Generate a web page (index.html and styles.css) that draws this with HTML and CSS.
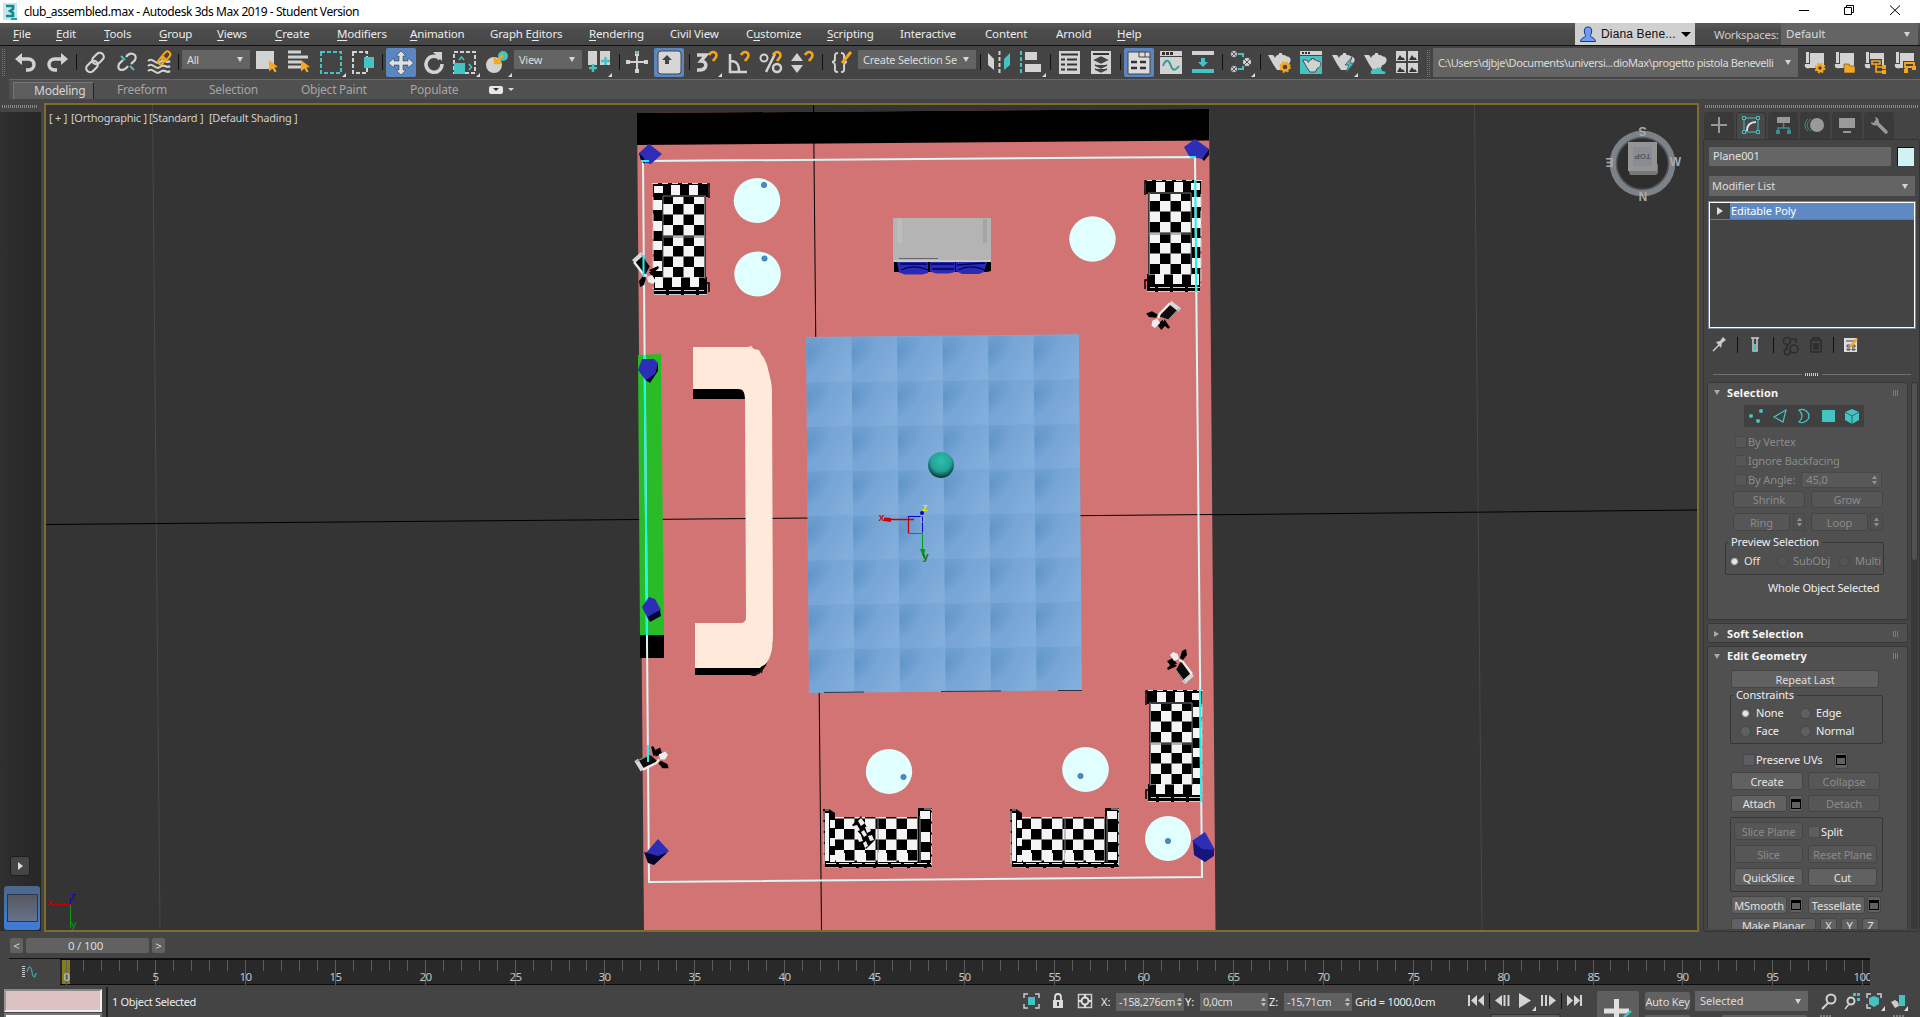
FILE: index.html
```html
<!DOCTYPE html>
<html lang="en">
<head>
<meta charset="utf-8">
<title>club_assembled.max - Autodesk 3ds Max 2019 - Student Version</title>
<link rel="stylesheet" href="styles.css">
</head>
<body>
<header class="titlebar">
  <svg class="logo" viewBox="0 0 17 20"><rect x="1" y="1" width="14" height="17" fill="#c9e6ea"/><path d="M4 4h7v3l-3 2 3 2v3H4" fill="none" stroke="#0c8a96" stroke-width="2.6"/><path d="M9 17h6" stroke="#17a6b0" stroke-width="2"/></svg>
  <span class="title">club_assembled.max - Autodesk 3ds Max 2019 - Student Version</span>
  <svg class="winctl" viewBox="1790 0 120 23" fill="none" stroke="#000"><path d="M1799 10.500h10M1844.500 7.500h7v7h-7zM1846.500 7.500v-2h7v7h-2M1890 5.500l10 9.500M1900 5.500l-10 9.500"/></svg>
</header>

<nav class="menubar">
  <div class="menus">
    <span><u>F</u>ile</span><span><u>E</u>dit</span><span><u>T</u>ools</span><span><u>G</u>roup</span><span><u>V</u>iews</span><span><u>C</u>reate</span><span><u>M</u>odifiers</span><span><u>A</u>nimation</span><span>Graph E<u>d</u>itors</span><span><u>R</u>endering</span><span>Civil View</span><span>C<u>u</u>stomize</span><span><u>S</u>cripting</span><span>Interactive</span><span>Content</span><span>Arnold</span><span><u>H</u>elp</span>
  </div>
  <div class="user"><svg viewBox="0 0 16 17"><path d="M8 1c3 0 4 2 3.600 5-.3 2-1 3-1.600 4 1 1.500 5 1.500 5.500 5.500H.5C1 11.500 5 11.500 6 10 5.300 9 4.700 8 4.400 6 4 3 5 1 8 1z" fill="#6f9df5" stroke="#16357c"/></svg><span>Diana Bene...</span><i class="tri black"></i></div>
  <span class="wslabel">Workspaces:</span>
  <div class="select ws"><span>Default</span><i class="tri"></i></div>
</nav>

<div class="toolbar">
  <svg class="tg" width="182" height="33" viewBox="0 46 182 33">
    <path d="M4.500 49v28M2.500 49v28" stroke="#777" stroke-dasharray="1 1"/>
    <g fill="none" stroke="#d2d2d2" stroke-width="3.400"><path d="M19 59h9c8 0 8 11 0 11h-2"/><path d="M64 59h-9c-8 0-8 11 0 11h2"/></g>
    <path d="M15 59l7-6v12zM68 59l-7-6v12z" fill="#d2d2d2"/>
    <path d="M76.500 54v16M178.500 54v16" stroke="#111"/>
    <g fill="none" stroke="#d2d2d2" stroke-width="2.200"><g id="chain"><rect x="94" y="52" width="8" height="13" rx="4" transform="rotate(45 98 58.500)"/><rect x="88" y="60" width="8" height="13" rx="4" transform="rotate(45 92 66.500)"/></g>
    <path d="M126 57c4-6 12-3 9 3l-4 4M128 66c-4 6-12 5-9-2l4-4"/>
    <path d="M148 61c5-5 7 5 12 1s6 2 10-1M148 66c5-5 7 5 12 1s6 2 10-1M148 71c5-5 7 5 12 1s6 2 10-1"/></g>
    <path d="M121 56l4 4M130 66l4 4" stroke="#45c3c3" stroke-width="2"/>
    <g fill="none" stroke="#f5a81c" stroke-width="2"><rect x="163" y="51" width="6" height="10" rx="3" transform="rotate(40 166 56)"/><rect x="159" y="57" width="5" height="8" rx="2.500" transform="rotate(40 162 61)"/></g>
  </svg>
  <div class="select sm"><span>All</span><i class="tri"></i></div>
  <svg class="tg" width="264" height="33" viewBox="250 46 264 33">
    <path d="M256 51h18v18h-18z" fill="#d2d2d2"/>
    <path id="cur" d="M269 60l9 7-3.500.5 2 4-2 1-2-4-3.500 3z" fill="#f5a81c"/>
    <path d="M288 52h13M288 57h20M288 62h13M288 67h13" stroke="#d2d2d2" stroke-width="3"/><use href="#cur" x="32"/>
    <rect x="321" y="52" width="20" height="21" fill="none" stroke="#45c3c3" stroke-width="2" stroke-dasharray="4 2"/>
    <rect x="353" y="52" width="14" height="21" fill="none" stroke="#d2d2d2" stroke-width="2" stroke-dasharray="4 2"/><path d="M364 57h10v11h-10z" fill="#45c3c3"/>
    <path d="M346 73v4h-4zM480 73v4h-4zM512 73v4h-4z" fill="#ddd"/>
    <path d="M382.500 54v16" stroke="#111"/>
    <rect x="386" y="48" width="30" height="29" rx="2" fill="#5c86c0"/>
    <path d="M401 51l5 5h-3v5h5v-3l5.500 5-5.500 5v-3h-5v5h3l-5 5-5-5h3v-5h-5v3l-5.500-5 5.500-5v3h5v-5h-3z" fill="#e0e0e0" stroke="#2c3e5c" stroke-width=".6"/>
    <path d="M440 59a8 8 0 1 0 2 5" fill="none" stroke="#d2d2d2" stroke-width="3.500"/><path d="M433 52h9v9z" fill="#d2d2d2"/>
    <rect x="454" y="52" width="21" height="21" fill="none" stroke="#d2d2d2" stroke-width="2" stroke-dasharray="4 2"/><path d="M454 63h11v11h-11z" fill="#45c3c3"/><path d="M459 60l2.500-3 2.500 3M469 64l2.500 3-2.500 3" fill="none" stroke="#45c3c3" stroke-width="1.600"/>
    <circle cx="494" cy="65" r="8" fill="#d2d2d2"/><circle cx="503" cy="56" r="5" fill="#45c3c3"/><path d="M503 55l-8 8M495 57v6h6" fill="none" stroke="#f5a81c" stroke-width="2.500"/>
  </svg>
  <div class="select sm"><span>View</span><i class="tri"></i></div>
  <svg class="tg" width="276" height="33" viewBox="582 46 276 33">
    <path d="M588 51h9v14h-9zM600 51h10v14h-10z" fill="#d2d2d2"/><path d="M589 68h8M593 64v8M601 61h9M605.500 57v8" stroke="#45c3c3" stroke-width="2.500"/>
    <path d="M612 73v4h-4zM722 73v4h-4z" fill="#ddd"/>
    <path d="M619.500 54v16M689.500 54v16M822.500 54v16" stroke="#111"/>
    <path d="M627 62h20M637 52v20" stroke="#d2d2d2" stroke-width="2"/><path d="M635 51h4v5h-4zM635 69h4v4h-4zM626 60h4v4h-4zM644 60h4v4h-4z" fill="#d2d2d2"/><path d="M637 51v3" stroke="#45c3c3" stroke-width="3"/>
    <rect x="654" y="48" width="30" height="29" rx="2" fill="#5c86c0"/><rect x="658" y="51" width="23" height="23" rx="3" fill="#d6d6d6" stroke="#444"/><path d="M667 55l5 5h-3v4h-4v-4h-3z" fill="#444"/>
    <path d="M697 55h9l-5 6c7 0 7 10-4 9" fill="none" stroke="#d2d2d2" stroke-width="3.500"/>
    <path id="mag" d="M709 55c3-5 9-3 7 2l-3 4" fill="none" stroke="#f5a81c" stroke-width="2.600"/>
    <path d="M730 54v18h17M731 61c7 0 8 5 8 11" fill="none" stroke="#d2d2d2" stroke-width="2.500"/><use href="#mag" x="32"/>
    <circle cx="764" cy="58" r="3.500" fill="none" stroke="#d2d2d2" stroke-width="2"/><circle cx="777" cy="68" r="4" fill="none" stroke="#d2d2d2" stroke-width="2.500"/><path d="M775 54l-9 18" stroke="#d2d2d2" stroke-width="2.500"/><use href="#mag" x="64"/>
    <path d="M791 61l6-8 6 8zM791 65l6 8 6-8z" fill="#d2d2d2"/><use href="#mag" x="96"/>
    <path d="M838 53c-4 0-3 3-3 6s-3 3-3 3 3 0 3 4-1 6 3 6M841 53c4 0 3 3 3 6s3 3 3 3-3 0-3 4 1 6-3 6" fill="none" stroke="#d2d2d2" stroke-width="2"/><path d="M851 52l-9 11" stroke="#f5a81c" stroke-width="3"/>
  </svg>
  <div class="select md"><span>Create Selection Se</span><i class="tri"></i></div>
  <svg class="tg" width="457" height="33" viewBox="976 46 457 33">
    <path d="M980.500 54v16M1050.500 54v16M1120.500 54v16M1222.500 54v16M1260.500 54v16" stroke="#111"/>
    <path d="M988 53l6 6v11l-6-5z" fill="#d2d2d2"/><path d="M999.500 51v23" stroke="#d2d2d2" stroke-width="2" stroke-dasharray="4 2"/><path d="M1010 53l-6 6v11l6-5z" fill="#45c3c3"/>
    <path d="M1021 51v23" stroke="#45c3c3" stroke-width="2" stroke-dasharray="4 2"/><path d="M1025 52h12v8h-12zM1025 64h16v8h-16z" fill="#d2d2d2"/><path d="M1046 73v4h-4zM1255 73v4h-4zM1358 73v4h-4z" fill="#ddd"/>
    <path d="M1059 51h21v23h-21zM1091 51h20v23h-20z" fill="#d2d2d2"/><path d="M1061 54.500h17M1061 59.500h4M1067 59.500h10M1061 64.500h4M1067 64.500h10M1061 69.500h4M1067 69.500h10" stroke="#333" stroke-width="1.800"/>
    <path d="M1093 54h16" stroke="#333" stroke-width="2"/><path d="M1095 60l6-3 6 3-6 3zM1095 65l6 3 6-3M1095 69l6 3 6-3" fill="#444" stroke="#444" stroke-width="1.500"/>
    <rect x="1124" y="48" width="30" height="29" rx="2" fill="#5c86c0"/><path d="M1128 52h22v22h-22z" fill="#dcdcdc" stroke="#444"/><path d="M1139 52v5h11M1145 52v5" fill="none" stroke="#444"/><path d="M1131 62h6M1140 62h6M1131 68h6M1140 68h6" stroke="#333" stroke-width="2.500"/>
    <path d="M1160 51h22v23h-22z" fill="#d2d2d2"/><path d="M1162 53.500h3M1166 53.500h3M1170 53.500h3" stroke="#333" stroke-width="3"/><path d="M1160 56.500h22" stroke="#444"/><path d="M1163 66c3-8 6-6 8 0s5 4 8 0" fill="none" stroke="#2e9d9f" stroke-width="2"/>
    <path d="M1192 53h22" stroke="#d2d2d2" stroke-width="4"/><path d="M1192 71h22" stroke="#45c3c3" stroke-width="4"/><path d="M1201 58h4v4h3l-5 5-5-5h3z" fill="#45c3c3"/>
    <g fill="#d2d2d2" stroke="#333" stroke-width=".8"><circle cx="1234" cy="54" r="3.500"/><circle cx="1234" cy="69" r="3.500"/><circle cx="1247" cy="62" r="4.500"/></g><path d="M1232 52l4 4m0-4l-4 4M1232 67l4 4m0-4l-4 4M1244 59l6 6m0-6l-6 6" stroke="#555"/><path d="M1238 54h5v3M1238 69h5v-3" fill="none" stroke="#45c3c3" stroke-width="2"/>
    <defs><path id="pot" d="M-1 5h5c1 1 1.500 2 2 3C7 5 9 5 10 4.500V3h3v1.500c2 .5 4 1 5 2 5 0 5 7-1 9l-2 4.500H8L4 14z" fill="#d2d2d2"/></defs>
    <use href="#pot" x="1269" y="50"/><circle cx="1285" cy="67" r="3.500" fill="#444" stroke="#f5a81c" stroke-width="2.500"/><circle cx="1285" cy="67" r="5" fill="none" stroke="#f5a81c" stroke-width="1.500" stroke-dasharray="2 2"/>
    <path d="M1300 51h22v4h-22z" fill="#d2d2d2"/><path d="M1302 53h9" stroke="#333" stroke-width="2" stroke-dasharray="2 1"/><path d="M1300 56h22v18h-22z" fill="#45c3c3"/><g transform="translate(1303.500 56) scale(.8)"><use href="#pot" stroke="#333"/></g>
    <use href="#pot" x="1333" y="50"/><path d="M1352 57l-7 8h4l-4 9 9-11h-4z" fill="#45c3c3" stroke="#444" stroke-width=".7"/>
    <use href="#pot" x="1365" y="50"/><path d="M1371 74c-1-4 2-6 5-5 2-3 6-1 6 2 5 0 4 3 2 3z" fill="#45c3c3"/>
    <path d="M1396 51h10v10h-10zM1408 51h10v10h-10zM1396 63h10v10h-10zM1408 63h10v10h-10z" fill="#d2d2d2"/><path d="M1397 60l3-5 2 3 1-1 2 3zM1409 60l3-5 2 3 1-1 2 3zM1397 72l3-5 2 3 1-1 2 3zM1409 72l3-5 2 3 1-1 2 3z" fill="#333"/>
    <path d="M1427.500 50v28M1429.500 50v28" stroke="#777" stroke-dasharray="1 1"/>
  </svg>
  <div class="select path"><span>C:\Users\djbje\Documents\universi...dioMax\progetto pistola Benevelli</span><i class="tri"></i></div>
  <svg class="tg" width="122" height="33" viewBox="1798 46 122 33">
    <defs><path id="scr" d="M1806 52h3v11h-3zM1810 53h14v15h-14c-3 1-6 0-5-4h5z" fill="#d2d2d2"/></defs>
    <use href="#scr"/><circle cx="1820" cy="68" r="3" fill="#444" stroke="#f5a81c" stroke-width="2.500"/><circle cx="1820" cy="68" r="4.700" fill="none" stroke="#f5a81c" stroke-width="1.500" stroke-dasharray="2 1.700"/>
    <use href="#scr" x="30"/><path d="M1844 64h5l1 2h5v7h-11z" fill="#f5a81c" stroke="#444" stroke-width=".6"/>
    <use href="#scr" x="60"/><path d="M1870 59h12v14h-12z" fill="#444"/><path d="M1872 61h8v3h-8zM1876 64v8h8M1876 67h8" fill="none" stroke="#f5a81c" stroke-width="1.600"/><path d="M1882 65h4v4h-4zM1882 70h4v4h-4z" fill="#f5a81c"/>
    <use href="#scr" x="90"/><path d="M1903 61h12v8h-12z" fill="#444"/><path d="M1905 63h9v4h-9zM1907 67v5M1907 68h-2" fill="none" stroke="#f5a81c" stroke-width="1.800"/><path d="M1904 69h4v4h-4zM1912 66h4v4h-4z" fill="#f5a81c"/>
  </svg>
</div>

<div class="ribbon">
  <div class="tab on">Modeling</div><div class="tabs"><span>Freeform</span><span>Selection</span><span>Object Paint</span><span>Populate</span></div>
  <div class="pill"><i></i></div><i class="tri tiny"></i>
</div>

<main class="work">
  <aside class="left">
    <div class="grip"></div>
    <div class="strip"><div class="play"><i></i></div><div class="layout"><i></i></div></div>
  </aside>

  <section class="viewport">
    <svg class="scene" width="1651" height="825" viewBox="46 105 1651 825">
      <defs>
        <radialGradient id="tshade" gradientUnits="userSpaceOnUse" cx="2" cy="24" r="26" gradientTransform="rotate(-40 2 24) scale(1.3 .7)"><stop offset="0" stop-color="#5f94c8"/><stop offset="1" stop-color="#5f94c8" stop-opacity="0"/></radialGradient>
        <linearGradient id="tg" x1="0" y1="0" x2="1" y2=".6"><stop offset="0" stop-color="#76a5d6"/><stop offset=".6" stop-color="#78a6d6"/><stop offset="1" stop-color="#82aedb"/></linearGradient>
        <pattern id="tile" width="45.500" height="44.500" patternUnits="userSpaceOnUse"><rect width="46" height="45" fill="url(#tg)"/><rect width="46" height="45" fill="url(#tshade)"/><path d="M0 .5h46" stroke="#7fabdb" stroke-width=".6"/></pattern>
        <pattern id="chk" width="21" height="21" patternUnits="userSpaceOnUse"><path fill="#f4f4f4" d="M0 0h21v21H0z"/><path d="M0 0h10.500v10.500H0zM10.500 10.500H21V21H10.500z"/></pattern>
        <radialGradient id="ball" cx=".5" cy=".35" r=".65"><stop offset="0" stop-color="#2bc0b0"/><stop offset=".6" stop-color="#24a396"/><stop offset="1" stop-color="#06332f"/></radialGradient>
        <g id="sofaV">
          <path d="M1 0h55v14h-2v80h1v18H2z" fill="#000"/>
          <path d="M2 3h9v7H2zM19 2h9v10h-9zM37 2h9v10h-9z" fill="#f4f4f4"/>
          <path d="M11 14h42v81H11z" fill="url(#chk)"/>
          <path d="M1 17h9v10H1zM1 38h9v10H1zM1 58h9v9H1zM1 78h9v10H1z" fill="#f4f4f4"/>
          <path d="M3 94h8v11H3zM20 94h9v10h-9zM38 94h9v10h-9z" fill="#f4f4f4"/>
          <path d="M11 13v83M12 54h42M53 13v83M11 13h43" stroke="#777" fill="none"/>
          <path d="M0 .5h57v14" fill="none" stroke="#ddd" stroke-dasharray="6 4"/><path d="M2 107.500h50M2 111.500h53M1 14v92" fill="none" stroke="#ccc" stroke-dasharray="12 3"/>
          <path d="M2 30h-1M55 1h2v14M55 100h2v9" fill="none" stroke="#000" stroke-width="1.500"/>
        </g>
        <g id="sofaH">
          <path d="M0 1h6l6 4v5h83V0h14v60H2z" fill="#000"/><path d="M12 9h83v45H12z" fill="url(#chk)"/>
          <path d="M97 3h10v8H97zM98 24h9v10h-9zM98 44h9v8h-9zM2 5h4v48H2zM7 12h5v8H7zM7 30h5v8H7zM7 47h5v7H7z" fill="#f4f4f4"/>
          <path d="M55 9v46M97 8v46" stroke="#888"/>
          <path d="M13 45h9v9h-9zM34 45h9v9h-9zM55 45h9v9h-9zM76 45h9v9h-9z" fill="#f4f4f4"/>
          <path d="M3 55.500h105" stroke="#eee" stroke-dasharray="10 3"/><path d="M1 56V2h5M101 1h7.500v57" fill="none" stroke="#ccc" stroke-dasharray="9 2"/>
          <path d="M2 59.500h107" stroke="#aaa" stroke-dasharray="14 3"/>
        </g>
        <g id="spot"><path d="M-12-9l7-6 9 13-5 9z" fill="#0c0c0c"/><path d="M-14-8l9-8 3 3-9 8z" fill="#d8d8d8"/><path d="M-12-6l9 12 4 2" fill="none" stroke="#eee" stroke-width="2.200"/><path d="M-5-14l9 12" stroke="#999"/><path d="M3 2l9-4 1 2-6 5zM-7 13l4-5 3 2-2 7-4 2zM3 4l7-1 3 4-6 3z" fill="#000"/><path d="M1 9l5-2 4 6-3 3-5-2z" fill="#eee"/></g>
      </defs>
      <g stroke="#484848"><path d="M152.500 105L160 930M1474.500 105l7.500 825"/></g>
      <path d="M46 524.500L640 519.500M1210 514.800L1697 510" stroke="#000"/>
      <path d="M637 113l572-4 6.500 821H644z" fill="#d27474"/>
      <path d="M637 113l572-4v31.500L637 145z"/>
      <path d="M813.500 105L821.500 930M640 519.500L1213 514.500" stroke="#000"/>
      <path d="M638 355l23-1 3 281h-24z" fill="#2abb29"/><path d="M640 635h24v23h-24z"/>
      <path d="M693 389v10h52v-12zM695 665v10h55l3 1c12-2 20-20 20-44l-17 28z"/>
      <path d="M752 674l4 1 1-2 4-1 1-4 3-3 1-5 3-4 1-8 2-6" fill="none" stroke="#111" stroke-width="2.500" stroke-dasharray="4 1"/>
      <path d="M693 347h55l3-1 3 3 5 1 2 4 3 4 3 7 3 12c2 9 2 10 2 20l1 239c0 14-3 28-11 30l-2 2h-65v-45h45c4 0 6-2 6-6l-1-217c0-8-2-11-7-11h-45z" fill="#ffe9da"/>
      <g transform="matrix(1 -.010 .0084 1 806 337)"><rect width="273" height="356" fill="url(#tile)"/></g>
      <path d="M824 692.500l40-.5M941 691.500l60-.5M1058 690.500h24" stroke="#334"/>
      <g fill="#e2ffff"><ellipse cx="757" cy="200.500" rx="23.300" ry="22.500"/><ellipse cx="757.500" cy="274" rx="23.300" ry="22.500"/><ellipse cx="1092.500" cy="239" rx="23.200" ry="22.700"/><ellipse cx="889" cy="771.500" rx="23.200" ry="22.500"/><ellipse cx="1085.500" cy="769.500" rx="23.300" ry="22.500"/><ellipse cx="1168" cy="838.500" rx="23" ry="22.500"/></g>
      <g fill="#4c8bc5" stroke="#346d9f" stroke-width=".8"><circle cx="764" cy="185" r="2.600"/><circle cx="764.500" cy="258.500" r="2.600"/><circle cx="903.500" cy="777" r="2.600"/><circle cx="1080.500" cy="776" r="2.600"/><circle cx="1168" cy="841" r="2.600"/></g>
      <path d="M893 218h98v44h-98z" fill="#b4b4b4"/><path d="M897 219h5v24h-5z" fill="#bdbdbd"/><path d="M983 219h4v24h-4z" fill="#a5a5a5"/><path d="M894 261h97" stroke="#ddd"/><path d="M899 258.500h39" stroke="#666"/>
      <path d="M894 262h97v9l-4 1H894z"/><path d="M897 262h31v11l-6 1.500h-17l-6-2zM930 262h25v10l-6 1.500h-13l-6-2zM956 262h31l-3 10-5 2h-17l-6-3z" fill="#2a2ab4"/><path d="M901 270c8-4 18-4 27 0M932 269h22M958 270c8-4 18-4 27 0M900 264h27M931 264h23M957 265l28-2" fill="none" stroke="#000060" stroke-width="1.300"/>
      <use href="#sofaV" x="652" y="183"/><use href="#sofaV" transform="translate(1202 180) scale(-1 1)"/><use href="#sofaV" transform="translate(1203 690) scale(-1 1)"/>
      <use href="#sofaH" x="823" y="808"/><use href="#sofaH" x="1010" y="808"/>
      <g transform="translate(853 818)"><path d="M-1 7L8-2l4 8 10 16-9 9-3-4-2-10z"/><path d="M8 0l4 5-4 3-3-5zM0 8l4-1 3 5-4 2zM12 9l4-1 2 5-4 2zM8 14l3-2 3 5-3 2zM4 18l4 0 2 5-4 1zM15 18l4-1 2 5-4 1zM10 25l3-2 2 5-3 2z" fill="#eee"/></g>
      <g fill="none" stroke-width="2"><path d="M643 161l552-4 7 720-553 5z" stroke="#d7f7f5"/><path d="M644.500 355l2.500 280M1195.300 180l1 112M1200 690l1.200 112" stroke="#20f2ee"/></g>
      <g><path d="M639 153l10-9 13 10-11 10-9-2z" fill="#2d2db8"/><path d="M639 153l5 5 1 6-4-3z" fill="#04042c"/>
      <path d="M1184 147l11-8 14 10-7 10-13-3z" fill="#2d2db8"/><path d="M1202 159l7-10v6l-5 6z" fill="#04042c"/>
      <path d="M642 359h12l4 4-3 12-8 7-9-12z" fill="#2d2db8"/><path d="M658 363v8l-8 12-4-3 9-6z" fill="#04042c"/>
      <path d="M642 607l7-10 6 2 6 11-14 7z" fill="#2d2db8"/><path d="M647 617l13-7 1 6-11 6z" fill="#04042c"/>
      <path d="M646 853l12-14 11 12-10 6z" fill="#2d2db8"/><path d="M644 852l14 4 10-4-14 13-6-2z" fill="#04042c"/>
      <path d="M1192 841l13-9 10 18-10 6z" fill="#2d2db8"/><path d="M1193 842l9 7 12 1v6l-9 6-11-7z" fill="#15157c"/></g>
      <path d="M641 161h8M1190 157h6" stroke="#20f2ee" stroke-width="2"/>
      <use href="#spot" x="646" y="268"/><use href="#spot" transform="translate(1166 316) rotate(80)"/><use href="#spot" transform="translate(1180 668) rotate(180)"/><use href="#spot" transform="translate(651 759) rotate(-80)"/>
      <path d="M643.500 255v22M648 745v17" stroke="#20f2ee" stroke-width="2"/>
      <ellipse cx="941" cy="465" rx="12.900" ry="13" fill="url(#ball)"/>
      <g fill="none"><path d="M890 519.500h24M908.500 516v17" stroke="#c40000" stroke-width="1.300"/><path d="M908 516.500h14.500v16" stroke="#0606c8"/><path d="M908 533.500h14.500v16" stroke="#009c10"/></g>
      <path d="M884 517.500l7 .5v4l-7-1z" fill="#d00000"/><path d="M920 549h5l-1 10z" fill="#009c10"/><circle cx="922" cy="513" r="2" fill="#0404c0"/><path d="M921 516h3v6h-3z" fill="none" stroke="#bbb" stroke-width=".7"/>
      <g class="axis strong"><text x="878.500" y="521" fill="#b51818">x</text><text x="922" y="511" fill="#e6e600">z</text><text x="922.500" y="560" fill="#166b1e">y</text></g>
      <path d="M51 904.500h20" stroke="#c40000" stroke-width="1.500"/><path d="M70.500 899v5" stroke="#0808c8"/><path d="M70.500 905v23" stroke="#0c9c14"/>
      <g class="axis"><text x="47" y="906" fill="#c40000">x</text><text x="70" y="900" fill="#0808c8">z</text><text x="71" y="928" fill="#0c9c14">y</text></g>
      <circle cx="1642.500" cy="163.500" r="29.500" fill="#2d2d2d" stroke="#7c8288" stroke-width="6.500"/><circle cx="1642.500" cy="163.500" r="26" fill="none" stroke="#54585c" stroke-width="1.500"/>
      <path d="M1629 142h28v22h1v9l-2 2h-26l-1-3z" fill="#777"/><path d="M1628 142h29v29h-29z" fill="#949494"/><path d="M1633 147h19v19h-19z" fill="#898c93"/>
      <g class="cube"><text transform="translate(1642.500 153.500) rotate(180)" class="top">TOP</text><text transform="translate(1642.500 127) rotate(180)">S</text><text transform="translate(1609.500 158) rotate(180)">E</text><text x="1675.500" y="166">W</text><text transform="translate(1643 192) rotate(180)">N</text></g>
    </svg>
    <div class="vlabel"><span>[ + ]</span><span>[Orthographic ]</span><span>[Standard ]</span><span>[Default Shading ]</span></div>
  </section>

  <aside class="panel">
    <div class="grip"></div>
    <div class="ptabs">
      <div><svg viewBox="0 0 24 24"><path d="M12 4v16M4 12h16" stroke="#999" stroke-width="2"/></svg></div>
      <div class="on"><svg viewBox="0 0 24 24" fill="none"><path d="M5 5h14v14H5z" stroke="#45c3c3"/><path d="M8 18c0-6 3-9 9-9" stroke="#ddd" stroke-width="2"/><path d="M3.500 3.500h3v3h-3zM17.500 3.500h3v3h-3zM3.500 17.500h3v3h-3zM17.500 17.500h3v3h-3z" fill="#444" stroke="#45c3c3"/></svg></div>
      <div><svg viewBox="0 0 24 24"><path d="M6 4h13v6H6z" fill="#999"/><path d="M12.500 10v5M7 18v-3h11v3" fill="none" stroke="#3d8c8c" stroke-width="1.500"/><path d="M5 17h4v4H5zM16 17h4v4h-4z" fill="#3d8c8c"/></svg></div>
      <div><svg viewBox="0 0 24 24"><path d="M8 6c-5 3-5 9 0 12M5 6c-4 3-4 9 0 12" fill="none" stroke="#3d8c8c"/><circle cx="14" cy="12" r="7" fill="#999"/></svg></div>
      <div><svg viewBox="0 0 24 24"><path d="M4 5h16v10H4zM8 18h8v2H8z" fill="#999"/></svg></div>
      <div><svg viewBox="0 0 24 24"><path d="M9 9l10 10" stroke="#999" stroke-width="3.500" stroke-linecap="round"/><path d="M8 4c4 1 5 5 3 8-4 1-7 0-7-3l3 1 2-3z" fill="#999"/></svg></div>
    </div>
    <div class="pbody">
      <div class="namerow"><div class="field">Plane001</div><div class="swatch"></div></div>
      <div class="select modlist"><span>Modifier List</span><i class="tri"></i></div>
      <div class="stack"><div class="item"><i></i><span>Editable Poly</span></div></div>
      <svg class="stackicons" width="206" height="24" viewBox="1709 334 206 24">
        <path d="M1714 352l6-6" stroke="#ccc" stroke-width="1.500"/><path d="M1717 343l4-1 3-4 3 3-4 3-1 5z" fill="#ccc"/>
        <path d="M1738.500 338v16M1774.500 338v16M1834.500 338v16" stroke="#111"/>
        <path d="M1752 339h8M1754 339v13h4v-13" fill="none" stroke="#ccc" stroke-width="1.500"/><path d="M1755 345h2v7h-2z" fill="#45c3c3"/>
        <g fill="none" stroke="#2b2b2b" stroke-width="1.500"><circle cx="1788" cy="342" r="3.500"/><circle cx="1795" cy="350" r="4"/><path d="M1792 340h5v4M1787 350l2-4M1789 350a3 3 0 1 0 2 2"/><path d="M1811 341h12M1814 341v-2h6v2M1812 342v10c0 1 0 1 1 1h8c1 0 1 0 1-1v-10M1815 344v7M1817 344v7M1819 344v7"/></g>
        <path d="M1845 339h13v14h-13z" fill="#ddd"/><path d="M1847 342h9M1848 346h3v2h-3zM1853 346h3v2h-3zM1848 350h3v1h-3zM1853 350h3v1h-3z" stroke="#444" fill="none"/><path d="M1858 340l-7 8" stroke="#f5a81c" stroke-width="2.500"/>
      </svg>
      <div class="splitter"><b></b><i></i><b></b></div>
      <div class="scroll">
        <div class="rolls">
          <section class="roll sel">
            <h3><i class="tri"></i>Selection<em></em></h3>
            <svg class="sub" width="120" height="22" viewBox="0 0 120 22"><g fill="#45c3c3"><circle cx="7" cy="11" r="2"/><circle cx="17" cy="6" r="2"/><circle cx="14" cy="16" r="2"/><path d="M78 5h13v12H78zM108 4l7 3v8l-7 4-7-4V7z"/></g><path d="M101 7l7 4 7-4M108 11v8" fill="none" stroke="#2b6464"/><g fill="none" stroke="#45c3c3" stroke-width="1.200"><path d="M42 5L30 12l9 5zM55 5c5-2 10 2 10 6s-5 8-10 6c4-4 4-8 0-12z"/></g></svg>
            <div class="ck dis"><i></i>By Vertex</div>
            <div class="ck dis"><i></i>Ignore Backfacing</div>
            <div class="ck dis"><i></i>By Angle:<div class="num">45,0<s></s></div></div>
            <div class="g2 dis"><div class="btn">Shrink</div><div class="btn">Grow</div></div>
            <div class="g4 dis"><div class="btn">Ring</div><div class="spin"><s></s></div><div class="btn">Loop</div><div class="spin"><s></s></div></div>
            <div class="box prev"><label>Preview Selection</label><div class="radios"><i class="r on"></i><span>Off</span><i class="r d"></i><span class="dt">SubObj</span><i class="r d"></i><span class="dt">Multi</span></div></div>
            <p>Whole Object Selected</p>
          </section>
          <section class="roll soft"><h3><i class="tri side"></i>Soft Selection<em></em></h3></section>
          <section class="roll geo">
            <h3><i class="tri"></i>Edit Geometry<em></em></h3>
            <div class="btn rep">Repeat Last</div>
            <div class="box cons"><label>Constraints</label><div class="rg"><i class="r on"></i><span>None</span><i class="r"></i><span>Edge</span><i class="r"></i><span>Face</span><i class="r"></i><span>Normal</span></div></div>
            <div class="ck uv"><i></i><span>Preserve UVs</span><div class="btn win"><b></b></div></div>
            <div class="gg"><div class="btn">Create</div><div class="btn off">Collapse</div></div>
            <div class="gw"><div class="btn">Attach</div><div class="btn win"><b></b></div><div class="btn off">Detach</div></div>
            <div class="box slice"><div class="btn off">Slice Plane</div><div class="ck"><i></i>Split</div><div class="btn off">Slice</div><div class="btn off">Reset Plane</div><div class="btn">QuickSlice</div><div class="btn">Cut</div></div>
            <div class="gw four"><div class="btn">MSmooth</div><div class="btn win"><b></b></div><div class="btn">Tessellate</div><div class="btn win"><b></b></div></div>
            <div class="mp"><div class="btn">Make Planar</div><div class="btn">X</div><div class="btn">Y</div><div class="btn">Z</div></div>
          </section>
        </div>
        <div class="sbar"><i></i></div>
      </div>
    </div>
  </aside>
</main>

<footer>
  <div class="slider"><div class="btn">&lt;</div><div class="btn frame">0 / 100</div><div class="btn">&gt;</div></div>
  <div class="timeline">
    <svg class="mini" width="51" height="26" viewBox="9 958 51 26"><path d="M24.500 965v11" stroke="#ccc" stroke-width="3" stroke-dasharray="1 1"/><path d="M28 971c2-7 4-6 5 0s3 6 4 1" fill="none" stroke="#3a9da0" stroke-width="1.500"/></svg>
    <svg class="ruler" id="ruler" width="1810" height="26" viewBox="60 958 1810 26"></svg>
  </div>
  <div class="status">
    <div class="listener"><i></i><b></b></div>
    <div class="msg">1 Object Selected</div>
    <svg width="80" height="30" viewBox="1020 987 80 30"><path d="M1025 998v-4h4M1036 994h4v4M1040 1004v4h-4M1029 1008h-4v-4" fill="none" stroke="#ccc" stroke-width="1.500"/><path d="M1029 997h7v8h-7z" fill="#45c3c3"/><path d="M1054 1000h10v8h-10z" fill="#ddd"/><path d="M1056 1000v-3c0-4 6-4 6 0v3" fill="none" stroke="#ddd" stroke-width="1.800"/><path d="M1059 1002v4" stroke="#444" stroke-width="2"/><path d="M1079.500 994.500h13v13h-13z" fill="none" stroke="#ccc" stroke-width="1.500"/><circle cx="1086" cy="1001" r="3.500" fill="none" stroke="#ddd" stroke-width="2"/><path d="M1086 994v3M1086 1005v3M1079 1001h3M1090 1001h3" stroke="#ddd" stroke-width="2"/></svg>
    <div class="coords"><span>X:</span><div class="num"><q>-158,276cm</q><s></s></div><span>Y:</span><div class="num"><q>0,0cm</q><s></s></div><span>Z:</span><div class="num"><q>-15,71cm</q><s></s></div></div>
    <div class="gridtxt">Grid = 1000,0cm</div>
    <svg class="keys" width="180" height="30" viewBox="1464 987 180 30">
      <g fill="#d4d4d4"><path d="M1468 995h2v11h-2zM1477 995v11l-6-5.500zM1484 995v11l-6-5.500zM1502 995v11l-7-5.500zM1503.500 995h2v11h-2zM1507.500 995h2v11h-2zM1519 993l12 7.500-12 7.500zM1541 995h2v11h-2zM1545 995h2v11h-2zM1549 995v11l7-5.500zM1567 995v11l6-5.500zM1574 995v11l6-5.500zM1580 995h2v11h-2zM1536 1006v5h-4z"/></g><path d="M1489.500 993v16M1561.500 993v16" stroke="#111"/>
      <rect x="1491" y="1014.500" width="69" height="8" fill="#5d5d5d" stroke="#333"/>
      <rect x="1597" y="991" width="42" height="32" rx="2" fill="#5e5e5e"/><path d="M1616.500 999v18M1604 1011h25" stroke="#e0e0e0" stroke-width="5"/><path d="M1624 1017l7-6" stroke="#45c3c3" stroke-width="2.500"/>
    </svg>
    <div class="col auto"><div class="btn">Auto Key</div><div class="btn"></div></div>
    <div class="col seld"><div class="select"><span>Selected</span><i class="tri"></i></div><div class="btn"></div></div>
    <svg width="111" height="30" viewBox="1809 987 111 30"><g fill="none" stroke="#d2d2d2" stroke-width="2"><circle cx="1832" cy="999" r="4.500"/><path d="M1829 1003l-6 6"/><circle cx="1852" cy="1001" r="3.500"/><path d="M1850 1004l-4 5M1868 998v-4h4M1878 994h4v4M1868 1004v4h4" stroke-width="1.500"/></g><path d="M1854 993h3v3h-3zM1858 993h3v3h-3zM1858 998h3v3h-3zM1875 996l5 2v6l-5 3-5-3v-6zM1900 995h6v11h-6z" fill="#45c3c3"/><path d="M1892 1002l4-2 3 2 1 4-4 2z" fill="#ccc"/><path d="M1886 1006v5h-4zM1909 1006v5h-4z" fill="#ddd"/><path d="M1821 1016h12M1894 1016h12" stroke="#bbb" stroke-dasharray="2 1"/></svg>
  </div>
</footer>
<script src="ruler.js"></script>
</body>
</html>
```
FILE: styles.css
```css
* { box-sizing: border-box; }
body { margin: 0; width: 1920px; height: 1017px; overflow: hidden; display: flex; flex-direction: column; background: #444; color: #dcdcdc; font: 11.500px/14px "Noto Sans", "Open Sans", sans-serif; }
svg { display: block; flex: none; }
i, s, em, q { font-style: normal; text-decoration: none; quotes: none; display: block; }
q::before, q::after { content: none; }
u { text-underline-offset: 2px; }

.titlebar { height: 23px; flex: none; background: #fff; color: #000; display: flex; align-items: center; padding: 0 10px 0 2px; font-size: 12px; letter-spacing: -.43px; }
.logo { width: 17px; height: 20px; margin-right: 5px; }
.title { flex: 1; }
.winctl { width: 120px; height: 23px; }

.menubar { height: 23px; flex: none; display: flex; align-items: stretch; background: linear-gradient(#5a5a5a, #4c4c4c 30%, #474747); border-bottom: 1px solid #111; color: #ececec; }
.menus { width: 1575px; padding-left: 13px; display: grid; grid-template-columns: 43px 48px 55px 58px 58px 62px 73px 80px 99px 81px 76px 81px 73px 85px 71px 61px 60px; align-items: center; white-space: nowrap; letter-spacing: -.15px; }
.user { width: 120px; background: #d0d0d0; color: #111; display: flex; align-items: center; padding-left: 5px; gap: 5px; font: 12px "Liberation Sans", sans-serif; letter-spacing: .15px; white-space: nowrap; }
.user svg { width: 16px; height: 17px; }
.wslabel { width: 86px; padding: 5px 0 0 19px; color: #ccc; letter-spacing: -.3px; }
.select { background: #646464; display: flex; align-items: center; justify-content: space-between; padding: 0 7px 0 5px; white-space: nowrap; overflow: hidden; color: #dcdcdc; }
.ws { width: 137px; padding-right: 8px; }
.tri { width: 0; height: 0; flex: none; border: 3px solid transparent; border-top: 5px solid #d6d6d6; border-bottom: 0; }
.tri.black { border-width: 5px 5px 0; border-top-color: #000; }
.tri.side { border: 3px solid transparent; border-left: 5px solid #aaa; border-right: 0; }
.tri.tiny { border-top-width: 3px; margin-left: 5px; }

.toolbar { height: 33px; flex: none; display: flex; }
.toolbar .select { height: 19px; margin-top: 4px; font-size: 11px; letter-spacing: -.25px; }
.toolbar .sm { width: 68px; }
.toolbar .md { width: 118px; }
.toolbar .path { width: 365px; height: 29px; margin-top: 2px; letter-spacing: -.42px; }

.ribbon { height: 20px; flex: none; margin-left: 9px; border-top: 1px solid #686868; background: #505050; display: flex; align-items: center; color: #a5a5a5; font-size: 12px; letter-spacing: -.25px; }
.ribbon .tab { width: 81px; height: 17px; margin: 2px 0 0 4px; background: #5d5d5d; border: 1px solid #767676; border-bottom: 0; border-right-color: #222; padding: 1px 0 0 20px; color: #d5d5d5; }
.tabs { display: grid; grid-template-columns: 92px 92px 109px 79px; margin-left: 23px; }
.pill { width: 14px; height: 8px; border-radius: 2px; background: #e8e8e8; display: grid; place-items: center; }
.pill i { border: 3px solid transparent; border-top-color: #333; border-bottom: 0; }

.work { flex: none; height: 833px; display: flex; }
.left { width: 44px; padding: 6px 0 0; }
.grip { height: 4px; margin-left: 2px; width: 35px; background: repeating-linear-gradient(90deg, #888 0 1px, transparent 1px 2px); border: solid #444; border-width: 0 0 1px; background-size: 100% 3px; }
.strip { width: 41px; height: 819px; margin-top: 3px; background: linear-gradient(90deg, #2f2f2f, #272727); display: flex; flex-direction: column; justify-content: flex-end; padding: 0 1px 1px 4px; }
.play { width: 20px; height: 20px; margin: 0 0 10px 6px; border-radius: 3px; background: #454545; border: 1px solid #1e1e1e; display: grid; place-items: center; }
.play i { border: 4px solid transparent; border-left: 5px solid #ddd; border-right: 0; }
.layout { height: 44px; border-radius: 3px; background: linear-gradient(#4f6685, #3d7cd2 80%); padding: 8px 2px 0 3px; }
.layout i { height: 28px; border: 1px solid #2b3646; background: linear-gradient(#56585f, #66738a); }
.viewport { width: 1655px; height: 829px; margin-top: 4px; border: 2px solid #7f6b2b; background: #343434; position: relative; flex: none; }
.vlabel { position: absolute; left: 3px; top: 6px; display: grid; grid-template-columns: 22px 78px 60px auto; color: #cfcfcf; font-size: 11px; letter-spacing: -.25px; white-space: nowrap; }
.axis { font: 11px "Liberation Sans", sans-serif; }
.strong { font-weight: bold; }
.cube { font: bold 12px "Liberation Sans", sans-serif; fill: #a9a9a9; text-anchor: middle; }
.cube .top { font-size: 8px; fill: #55585e; }

.panel { flex: 1; padding: 6px 0 0 4px; font-size: 11px; letter-spacing: -.1px; color: #e2e2e2; overflow: hidden; }
.panel .grip { width: 214px; }
.ptabs { height: 30px; display: flex; gap: 2px; padding: 3px 0 0 1px; }
.ptabs div { width: 30px; height: 27px; background: #3a3a3a; border-radius: 4px 4px 0 0; padding: 1px 3px; }
.ptabs .on { background: #484848; border: 1px solid #353535; border-bottom: 0; padding: 0 2px; }
.ptabs svg { width: 24px; height: 24px; }
.pbody { border: 1px solid #343434; height: 793px; padding: 7px 0 0 5px; border-radius: 3px; }
.namerow { display: flex; height: 19px; gap: 6px; }
.field { width: 182px; background: #656565; padding: 2px 4px; }
.swatch { width: 17px; background: #d0f2f5; border: solid #111; border-width: 1px 0 0 1px; }
.modlist { width: 206px; height: 20px; margin-top: 10px; padding-left: 3px; }
.stack { width: 208px; height: 128px; margin: 5px 0 0 -1px; border: 2px solid #fff; outline: 1px solid #75869a; outline-offset: -1px; }
.stack .item { height: 17px; display: flex; align-items: center; border-bottom: 1px solid #777; }
.stack .item i { border: 4px solid transparent; border-left: 6px solid #ddd; border-right: 0; width: 0; height: 8px; margin: 0 7px; }
.stack .item span { flex: 1; height: 16px; background: #5e89c2; color: #fff; padding: 1px; }
.stackicons { margin: 4px 0 0 -1px; }
.splitter { height: 25px; margin: 0 0 0 4px; padding-top: 9px; width: 198px; display: flex; align-items: center; gap: 3px; }
.splitter b { flex: 1; height: 1px; background: #707070; }
.splitter i { width: 14px; height: 3px; background: repeating-linear-gradient(90deg, #ccc 0 1px, transparent 1px 2px); }
.scroll { height: 547px; display: flex; overflow: hidden; margin-left: -2px; }
.rolls { width: 201px; display: flex; flex-direction: column; gap: 3px; }
.roll { background: #505050; border: 1px solid #393939; border-radius: 3px; flex: none; overflow: hidden; }
.sel { height: 238px; } .soft { height: 20px; } .geo { height: 290px; }
h3 { margin: 0; height: 19px; padding: 0 8px 0 6px; display: flex; align-items: center; gap: 7px; font-size: 11px; letter-spacing: .1px; color: #f4f4f4; }
.geo h3 { height: 18px; }
h3 .tri { border-top-color: #aaa; } h3 .tri.side { border-top-color: transparent; margin-right: 1px; }
h3 em { width: 6px; height: 6px; margin-left: auto; background: repeating-linear-gradient(90deg, #999 0 1px, transparent 1px 2px); opacity: .6; }
.sub { margin: 3px 0 5px 36px; background: #404040; }
.ck { display: flex; align-items: center; height: 19px; padding-left: 27px; white-space: nowrap; color: #eee; gap: 1px; }
.ck > i { width: 12px; height: 12px; flex: none; background: #5e5e5e; border: 1px solid #494949; }
.dis, .ck.dis { color: #8b8b8b; }
.dis.ck > i, .dis .btn, .btn.off { background: #565656; color: #8b8b8b; }
.num { background: #616161; height: 18px; display: flex; align-items: center; justify-content: space-between; padding: 0 4px; }
.dis .num { width: 81px; height: 16px; background: #585858; border: 1px solid #484848; margin-left: 5px; }
s { width: 5px; height: 8px; flex: none; display: flex; flex-direction: column; justify-content: space-between; }
s::before, s::after { content: ""; border: 2.500px solid transparent; }
s::before { border-bottom: 3px solid #bbb; border-top: 0; }
s::after { border-top: 3px solid #bbb; border-bottom: 0; }
.dis s { opacity: .6; }
.btn { background: #616161; border: 1px solid #454545; border-radius: 3px; display: flex; align-items: center; justify-content: center; white-space: nowrap; overflow: hidden; padding-top: 1px; }
.spin { border: 1px solid #484848; display: grid; place-items: center; }
.g2 { display: grid; grid-template-columns: 72px 72px; gap: 6px; height: 17px; margin: 2px 0 5px 25px; }
.g4 { display: grid; grid-template-columns: 57px 12px 60px 12px; gap: 0 3px; height: 18px; margin-left: 25px; }
.g4 :nth-child(3) { margin-left: 3px; } .g4 :nth-child(4) { margin-left: -1px; }
.g4 s { margin: 0 !important; }
.box { border: 1px solid #363636; border-radius: 2px; }
.box label { display: block; width: max-content; height: 14px; margin: -8px 0 0 2px; padding: 0 3px; background: #505050; color: #eee; }
.prev { width: 159px; height: 33px; margin: 11px 0 0 17px; }
.radios { display: grid; grid-template-columns: 15px 33px 16px 46px 16px 30px; align-items: center; padding: 5px 0 0 3px; }
.r { width: 11px; height: 11px; border-radius: 50%; background: #606060; border: 1px solid #484848; }
.r.on { background: radial-gradient(#e4e4e4 0 35%, #666 60%); }
.r.d { background: #545454; } .dt { color: #8b8b8b; }
.sel p { margin: 6px 0 0 60px; color: #eee; letter-spacing: -.2px; }
.rep { width: 148px; height: 18px; margin: 5px 0 7px 23px; color: #ddd; }
.cons { width: 153px; height: 49px; margin-left: 22px; }
.rg { display: grid; grid-template-columns: 16px 44px 16px 50px; row-gap: 4px; align-items: center; padding: 4px 0 0 9px; color: #eee; }
.uv { margin-top: 6px; height: 20px; padding-left: 35px; }
.uv span { width: 77px; }
.win { width: 14px; height: 17px; padding: 0; border-radius: 3px; }
.win b { width: 10px; height: 10px; border: 1px solid #000; border-top-width: 3px; }
.gg, .gw, .mp { display: grid; margin-left: 23px; height: 18px; }
.gg { grid-template-columns: 72px 72px; gap: 5px; margin-top: 2px; }
.gw { grid-template-columns: 56px 14px 72px; column-gap: 2px; margin-top: 5px; height: 17px; }
.gw > :nth-child(3) { margin-left: 3px; width: 72px; }
.gw.four { grid-template-columns: 56px 14px 57px 14px; height: 18px; margin-top: 3px; }
.gw.four > :nth-child(3) { width: 57px; } .gw.four > :nth-child(4) { margin-left: 3px; width: 14px; }
.slice { width: 153px; height: 75px; margin: 5px 0 4px 22px; padding: 4px 3px; display: grid; grid-template-columns: 69px 69px; grid-auto-rows: 18px; gap: 5px; }
.slice .ck { padding: 0; }
.mp { grid-template-columns: 85px 17px 17px 17px; gap: 4px; margin-top: 4px; }
.mp .btn { align-items: flex-start; padding: 1px 0 0; line-height: 12px; }
.sbar { width: 7px; margin-left: 3px; background: #393939; border-radius: 3px; }
.sbar i { height: 179px; border-radius: 3px; background: #515151; border: 1px solid #353535; }

footer { flex: 1; display: flex; flex-direction: column; }
.slider { height: 26px; display: flex; gap: 1px; padding: 5px 0 4px 9px; flex: none; }
.slider .btn { width: 15px; } .slider .frame { width: 125px; padding-right: 4px; letter-spacing: -.2px; }
.timeline { display: flex; height: 26px; flex: none; border-top: 1px solid #111; margin: 0 50px 0 9px; }
.mini { margin-left: -1px; margin-right: 1px; }
.ruler { background: #292929; }
.ruler text { font: 11.500px "Noto Sans", sans-serif; fill: #c4c4c4; text-anchor: middle; letter-spacing: -.5px; }
.status { flex: 1; display: flex; align-items: flex-start; padding-left: 4px; overflow: hidden; font-size: 11px; margin-top: 3px; }
.listener { width: 104px; height: 30px; border-right: 2px solid #1d1d1d; padding-top: 2px; }
.listener i { width: 98px; height: 23px; background: #dcc2c2; border: 2px solid #eee; border-top-color: #888; border-left-color: #999; }
.listener b { display: block; width: 98px; height: 8px; background: #fff; border: 2px solid #777; margin-top: 1px; }
.msg { width: 911px; padding: 8px 0 0 4px; color: #eee; letter-spacing: -.3px; }
.coords { width: 255px; display: grid; grid-template-columns: 15px 68px 16px 68px 16px 68px; padding: 6px 0 0 2px; align-items: center; color: #eee; }
.coords .num q { overflow: hidden; white-space: nowrap; letter-spacing: -.35px; }
.coords .num { color: #ddd; padding: 0 2px 0 3px; }
.coords span:nth-child(n+3) { padding-left: 1px; }
.gridtxt { width: 110px; padding: 8px 0 0 1px; color: #eee; white-space: nowrap; letter-spacing: -.25px; }
.col { display: flex; flex-direction: column; gap: 3px; padding-top: 4px; }
.auto { width: 47px; margin-right: 4px; } .auto .btn { height: 20px; letter-spacing: -.2px; }
.seld { width: 113px; } .seld .select { height: 20px; } .seld .btn { height: 12px; margin-left: 26px; }
```
FILE: ruler.js
```js
const ruler = document.getElementById('ruler');
const frameX = f => 66.5 + f * 17.965;
let out = '<path d="M60 958.500h1810M60 983.500h1810" stroke="#0c0c0c"/>';
out += '<rect x="62" y="959" width="8" height="24" fill="#877c1c"/>';
for (let f = 0; f <= 100; f++) {
  const major = f % 5 === 0;
  const x = Math.round(frameX(f)) - 0.5;
  out += `<path d="M${x} 959V${major ? 984 : 970}" stroke="#5c5c5c"/>`;
  if (major) out += `<text x="${x}" y="980">${f}</text>`;
}
ruler.innerHTML = out;
```
